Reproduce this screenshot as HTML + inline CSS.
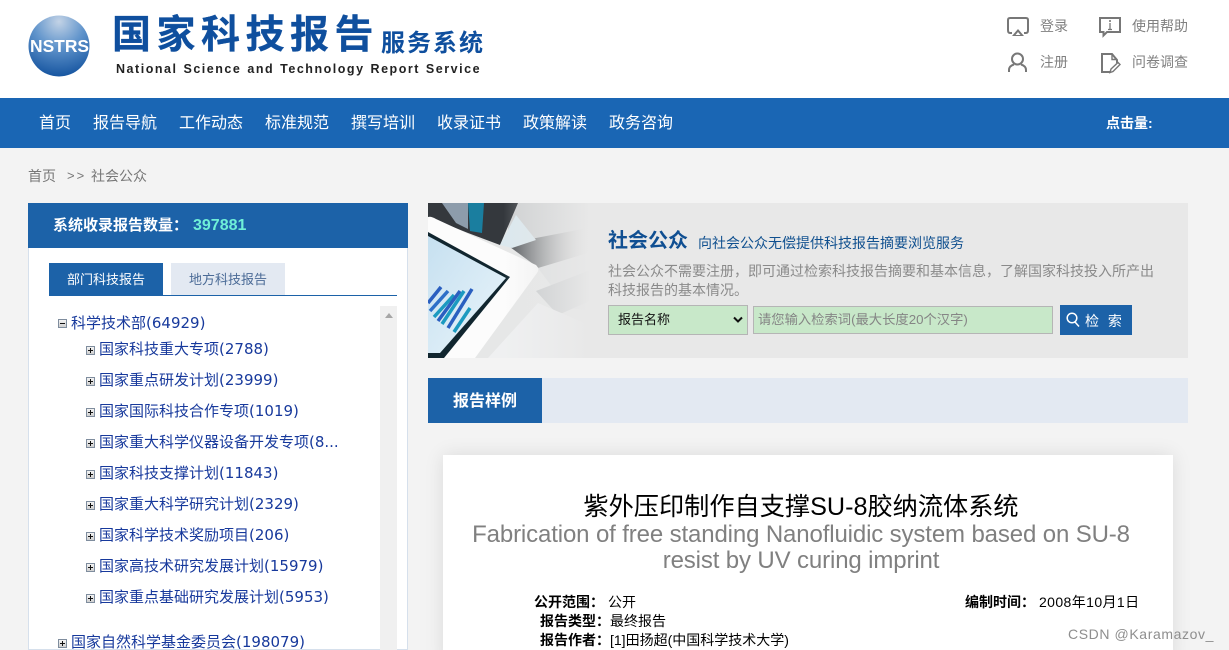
<!DOCTYPE html>
<html lang="zh"><head><meta charset="utf-8"><title>社会公众</title>
<style>
*{margin:0;padding:0;box-sizing:border-box}
html,body{width:1229px;height:650px;overflow:hidden;background:#f3f3f3}
#w{position:relative;width:1229px;height:650px;overflow:hidden;font-family:"Liberation Sans","Noto Sans CJK SC",sans-serif}
.a{position:absolute;white-space:nowrap}
#top{position:absolute;left:0;top:0;width:1229px;height:98px;background:#fff}
#nav{position:absolute;left:0;top:98px;width:1229px;height:50px;background:#1a66b4}
.nv{position:absolute;top:114px;font-size:16px;line-height:20px;color:#fff}
.tl{position:absolute;font-size:14px;line-height:18px;color:#808080}
.tr{position:absolute;font-family:"DejaVu Sans","Noto Sans CJK SC",sans-serif;font-size:15px;line-height:20px;color:#17399c;white-space:nowrap}
.pm{position:absolute;width:9px;height:9px;border:1px solid #7f8d9e;background:linear-gradient(#f4f4f4,#cfcfcf)}
.pm:before{content:"";position:absolute;left:1px;top:3px;width:5px;height:1px;background:#111}
.pm.p:after{content:"";position:absolute;left:3px;top:1px;width:1px;height:5px;background:#111}
.m{font-size:14px;line-height:19px;color:#000}
.b{font-weight:700}
</style></head><body><div id="w">
<div id="top"></div>
<svg class="a" style="left:28px;top:15px" width="63" height="63" viewBox="0 0 63 63"><defs><radialGradient id="g" cx=".5" cy=".1" r=".95"><stop offset="0" stop-color="#c3d3e6"/><stop offset=".45" stop-color="#5f93cb"/><stop offset="1" stop-color="#0f4f9c"/></radialGradient></defs><circle cx="31" cy="31" r="30.500" fill="url(#g)"/><text x="31.500" y="37" text-anchor="middle" font-family="Liberation Sans" font-weight="700" font-size="17.500" textLength="59" lengthAdjust="spacingAndGlyphs" fill="#fff">NSTRS</text></svg>
<div class="a" style="left:112px;top:14px;font-size:39px;line-height:44px;font-weight:700;color:#0f4f9e;letter-spacing:5.500px;-webkit-text-stroke:.3px #0f4f9e">国家科技报告</div>
<div class="a" style="left:381px;top:30px;font-size:24px;line-height:28px;font-weight:700;color:#0f4f9e;letter-spacing:2px">服务系统</div>
<div class="a" style="left:116px;top:61px;font-size:12.500px;line-height:17px;font-weight:700;color:#222;letter-spacing:1.520px;word-spacing:1px">National Science and Technology Report Service</div>

<svg class="a" style="left:1005px;top:15px" width="26" height="24" fill="none" stroke="#777" stroke-width="2"><path d="M7 18H5Q3 18 3 15V5Q3 3 5 3H21Q23 3 23 5V15Q23 18 21 18H19"/><path d="M13 14L19 21H7Z" fill="#777" stroke="none"/><path d="M13 17L15.500 20H10.500Z" fill="#fff" stroke="none"/></svg>
<div class="tl" style="left:1040px;top:17px">登录</div>
<svg class="a" style="left:1097px;top:15px" width="26" height="24" fill="none" stroke="#777" stroke-width="2"><path d="M3 3H23V17H10L6.500 20.500V17H3Z"/><path d="M13 8V14.500M11 14.500H15" stroke-width="1.300"/><path d="M13 5V7" stroke-width="1.600"/></svg>
<div class="tl" style="left:1132px;top:17px">使用帮助</div>
<svg class="a" style="left:1005px;top:51px" width="24" height="24" fill="none" stroke="#777" stroke-width="2"><circle cx="12.500" cy="8" r="5.500"/><path d="M4 21V19Q4 15 9 13.500M21 21V19Q21 15 16 13.500"/></svg>
<div class="tl" style="left:1040px;top:53px">注册</div>
<svg class="a" style="left:1099px;top:51px" width="24" height="24" fill="none" stroke="#777" stroke-width="2"><path d="M11 21H3V3H13L18 9V12"/><path d="M13 3V8.500H18" stroke-width="1.400"/><path d="M11 21.500L12 18L19 11.500L21 13.500L14 20.500Z" stroke-width="1.400"/></svg>
<div class="tl" style="left:1132px;top:53px">问卷调查</div>

<div id="nav"></div>
<div class="nv" style="left:39px">首页</div>
<div class="nv" style="left:93px">报告导航</div>
<div class="nv" style="left:179px">工作动态</div>
<div class="nv" style="left:265px">标准规范</div>
<div class="nv" style="left:351px">撰写培训</div>
<div class="nv" style="left:437px">收录证书</div>
<div class="nv" style="left:523px">政策解读</div>
<div class="nv" style="left:609px">政务咨询</div>
<div class="a" style="left:1106px;top:114px;font-size:14px;line-height:18px;font-weight:700;color:#fff">点击量:</div>

<div class="a" style="left:28px;top:167px;font-size:14px;line-height:18px;color:#777">首页</div>
<div class="a" style="left:67px;top:167px;font-size:13px;line-height:18px;color:#777;letter-spacing:2px">&gt;&gt;</div>
<div class="a" style="left:91px;top:167px;font-size:14px;line-height:18px;color:#777">社会公众</div>

<!-- left panel -->
<div class="a" style="left:28px;top:203px;width:380px;height:447px;background:#fff;border:1px solid #d6e0ec;border-top:0"></div>
<div class="a" style="left:28px;top:203px;width:380px;height:45px;background:#1c62a8"></div>
<div class="a" style="left:53px;top:216px;font-size:15px;line-height:20px;font-weight:700;color:#fff">系统收录报告数量：</div>
<div class="a" style="left:193px;top:216px;font-size:16px;line-height:20px;font-weight:700;color:#6ff0d8">397881</div>
<div class="a" style="left:49px;top:263px;width:114px;height:33px;background:#1c62a8;color:#fff;font-size:13px;line-height:33px;text-align:center">部门科技报告</div>
<div class="a" style="left:171px;top:263px;width:114px;height:32px;background:#e3e9f2;color:#4a6a96;font-size:13px;line-height:33px;text-align:center">地方科技报告</div>
<div class="a" style="left:49px;top:295px;width:348px;height:1px;background:#1c62a8"></div>
<div class="a" style="left:380px;top:306px;width:17px;height:344px;background:#f0f0f0"></div>
<div class="a" style="left:385px;top:313px;width:0;height:0;border-left:4px solid transparent;border-right:4px solid transparent;border-bottom:5px solid #a6a6a6"></div>

<div class="pm" style="left:58px;top:319px"></div><div class="tr" style="left:71px;top:313px">科学技术部(64929)</div>
<div class="pm p" style="left:86px;top:346px"></div><div class="tr" style="left:99px;top:339px">国家科技重大专项(2788)</div>
<div class="pm p" style="left:86px;top:377px"></div><div class="tr" style="left:99px;top:370px">国家重点研发计划(23999)</div>
<div class="pm p" style="left:86px;top:408px"></div><div class="tr" style="left:99px;top:401px">国家国际科技合作专项(1019)</div>
<div class="pm p" style="left:86px;top:439px"></div><div class="tr" style="left:99px;top:432px">国家重大科学仪器设备开发专项(8...</div>
<div class="pm p" style="left:86px;top:470px"></div><div class="tr" style="left:99px;top:463px">国家科技支撑计划(11843)</div>
<div class="pm p" style="left:86px;top:501px"></div><div class="tr" style="left:99px;top:494px">国家重大科学研究计划(2329)</div>
<div class="pm p" style="left:86px;top:532px"></div><div class="tr" style="left:99px;top:525px">国家科学技术奖励项目(206)</div>
<div class="pm p" style="left:86px;top:563px"></div><div class="tr" style="left:99px;top:556px">国家高技术研究发展计划(15979)</div>
<div class="pm p" style="left:86px;top:594px"></div><div class="tr" style="left:99px;top:587px">国家重点基础研究发展计划(5953)</div>
<div class="pm p" style="left:58px;top:639px"></div><div class="tr" style="left:71px;top:632px">国家自然科学基金委员会(198079)</div>

<!-- banner -->
<div class="a" style="left:428px;top:203px;width:760px;height:155px;background:#e8e8e8"></div>
<svg class="a" style="left:428px;top:203px" width="180" height="155" viewBox="0 0 180 155">
<defs><linearGradient id="f" x1="0" x2="1"><stop offset="0" stop-color="#e8e8e8" stop-opacity="0"/><stop offset=".42" stop-color="#e8e8e8" stop-opacity="0"/><stop offset=".9" stop-color="#e8e8e8" stop-opacity="1"/><stop offset="1" stop-color="#e8e8e8"/></linearGradient>
<linearGradient id="s" x1="0" y1="0" x2="1" y2="1"><stop offset="0" stop-color="#c6e0f0"/><stop offset="1" stop-color="#eaf5fb"/></linearGradient>
<linearGradient id="d" x1="0" x2="1"><stop offset="0" stop-color="#505458"/><stop offset="1" stop-color="#dcdcdc"/></linearGradient></defs>
<rect width="180" height="155" fill="#e6e7e7"/>
<path d="M80 0H180V40H80Z" fill="#cfd1d2"/>
<path d="M82 44L108 35L160 25L165 48L112 66Z" fill="url(#d)"/>
<path d="M0 0H90L72 42L40 30L0 14Z" fill="#34383d"/>
<path d="M14 0H40V26L28 20Z" fill="#8d9cab"/>
<path d="M40 0H56L54 30L42 28Z" fill="#1a7e9f"/>
<path d="M88 12L108 37L84 45L72 42Z" fill="#dbe8ee"/>
<path d="M110 65L180 44V110L140 105Z" fill="#dcdedf"/>
<path d="M108 88L165 66L180 90L130 112Z" fill="#c4c7c9"/>
<path d="M60 155L110 100L180 130V155Z" fill="#eff0f1"/>
<path d="M0 14Q3 13 8 16L108 62Q112 66 109 70L47 155H0Z" fill="#fcfcfc"/>
<path d="M0 29L82 74L16 155H0Z" fill="#11262f"/>
<path d="M0 33L78 75L12 150L0 150Z" fill="url(#s)"/>
<g stroke-width="3.500" fill="none"><path d="M0 100L13 84" stroke="#2a5fc0"/><path d="M2 108L20 88" stroke="#2d6fc8"/><path d="M6 114L26 92" stroke="#1b9ac0"/><path d="M10 118L32 88" stroke="#2a5fc0"/><path d="M14 121L36 88" stroke="#1b9ac0"/><path d="M20 125L44 86" stroke="#2a5fc0"/><path d="M26 129L42 105" stroke="#1b9ac0"/></g>
<rect width="180" height="155" fill="url(#f)"/>
</svg>
<div class="a" style="left:608px;top:229px;font-size:20px;line-height:24px;font-weight:700;color:#104f92">社会公众</div>
<div class="a" style="left:698px;top:234px;font-size:14px;line-height:18px;color:#10508f">向社会公众无偿提供科技报告摘要浏览服务</div>
<div class="a" style="left:608px;top:261px;font-size:14px;line-height:20px;color:#8a8a8a">社会公众不需要注册，即可通过检索科技报告摘要和基本信息，了解国家科技投入所产出</div>
<div class="a" style="left:608px;top:280px;font-size:14px;line-height:20px;color:#8a8a8a">科技报告的基本情况。</div>
<div class="a" style="left:608px;top:305px;width:140px;height:30px;background:#c8e8c9;border:1px solid #b5b5b5;font-size:13px;line-height:28px;color:#111;padding-left:9px">报告名称</div>
<svg class="a" style="left:733px;top:316px" width="10" height="8" fill="none" stroke="#111" stroke-width="2"><path d="M1 1.500L5 5.500L9 1.500"/></svg>
<div class="a" style="left:753px;top:306px;width:300px;height:28px;background:#c8e8c9;border:1px solid #b5b5b5;font-size:13.300px;line-height:25px;color:#858585;padding-left:4px">请您输入检索词(最大长度20个汉字)</div>
<div class="a" style="left:1060px;top:305px;width:72px;height:30px;background:#1c62a8"></div>
<svg class="a" style="left:1066px;top:312px" width="14" height="16" fill="none" stroke="#fff" stroke-width="1.500"><circle cx="6" cy="6" r="4.800"/><path d="M9 10L13 14.500"/></svg>
<div class="a" style="left:1085px;top:311px;font-size:14px;line-height:20px;color:#fff;letter-spacing:2.500px">检 索</div>

<div class="a" style="left:428px;top:378px;width:760px;height:45px;background:#e3e9f2"></div>
<div class="a" style="left:428px;top:378px;width:114px;height:45px;background:#1c62a8;color:#fff;font-size:16px;font-weight:700;line-height:47px;text-align:center">报告样例</div>

<!-- card -->
<div class="a" style="left:443px;top:455px;width:730px;height:210px;background:#fff;box-shadow:0 0 18px rgba(0,0,0,.1)"></div>
<div class="a" style="left:443px;top:492px;width:716px;text-align:center;font-size:25.200px;line-height:30px;color:#000">紫外压印制作自支撑SU-8胶纳流体系统</div>
<div class="a" style="left:443px;top:522px;width:716px;text-align:center;font-size:24px;letter-spacing:-.13px;line-height:25.500px;color:#808080">Fabrication of free standing Nanofluidic system based on SU-8<br>resist by UV curing imprint</div>
<div class="a m b" style="left:534px;top:593px">公开范围：</div>
<div class="a m" style="left:608px;top:593px">公开</div>
<div class="a m b" style="left:540px;top:612px">报告类型：</div>
<div class="a m" style="left:610px;top:612px">最终报告</div>
<div class="a m b" style="left:540px;top:631px">报告作者：</div>
<div class="a m" style="left:610px;top:631px">[1]田扬超(中国科学技术大学)</div>
<div class="a m b" style="left:965px;top:593px">编制时间：</div>
<div class="a m" style="left:1039px;top:593px;letter-spacing:.4px">2008年10月1日</div>
<div class="a" style="left:1068px;top:625px;font-size:14px;line-height:18px;color:#8e8e8e;letter-spacing:.6px">CSDN @Karamazov_</div>
</div></body></html>
